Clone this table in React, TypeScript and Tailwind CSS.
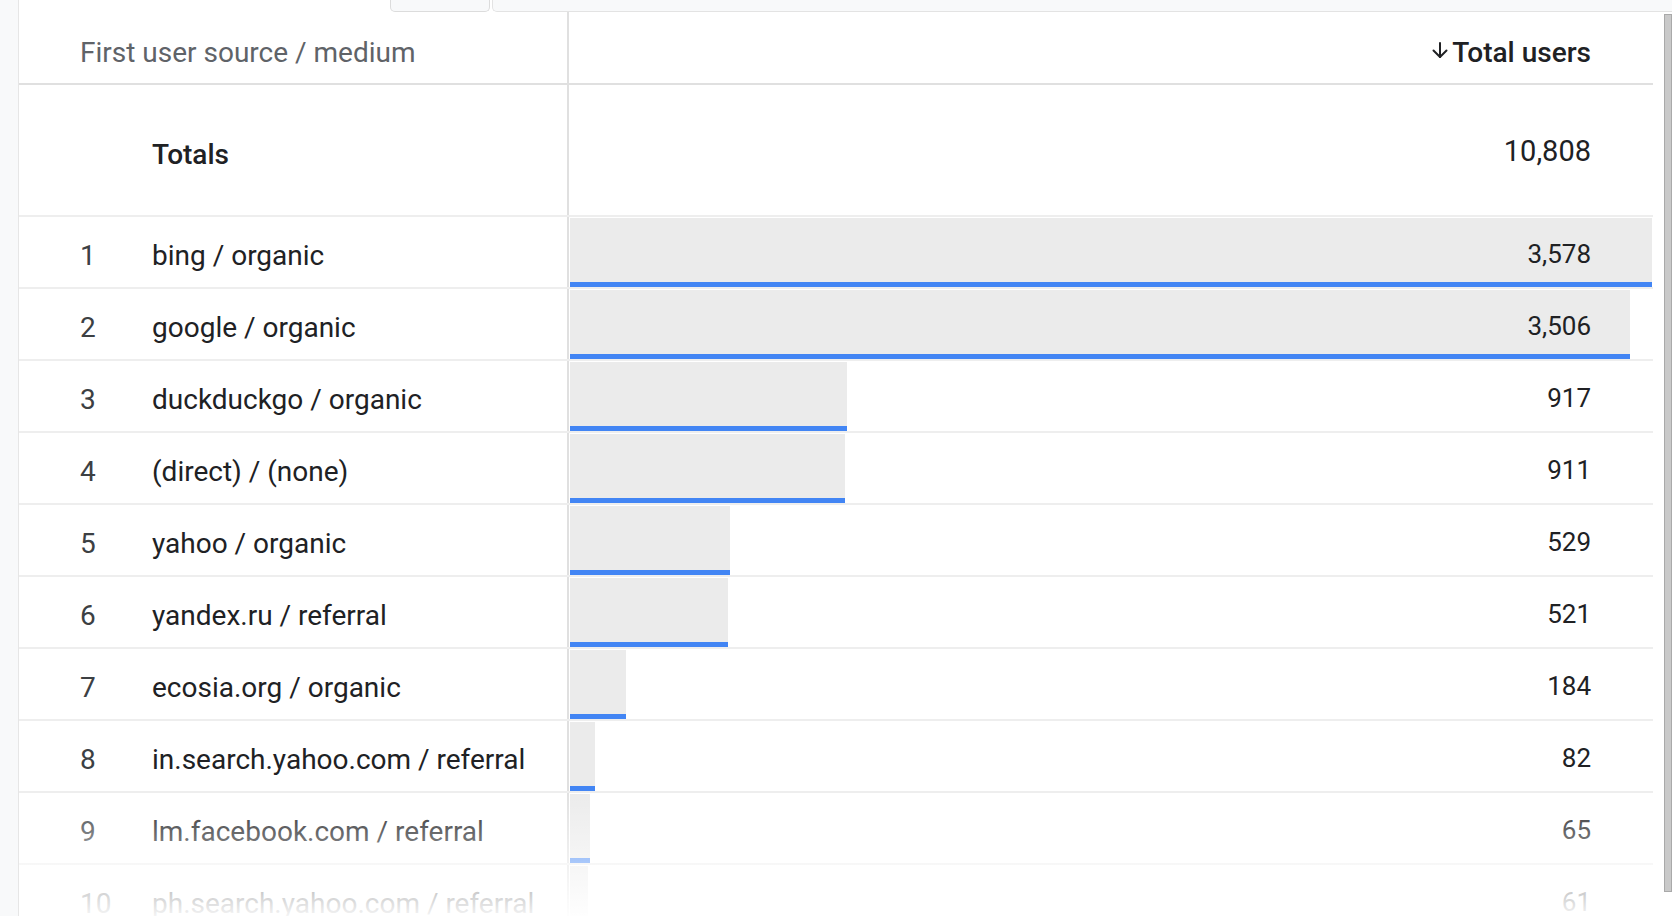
import { useMemo } from 'react'

interface Row {
  source: string
  users: number
}

const rows: Row[] = [
  { source: 'bing / organic', users: 3578 },
  { source: 'google / organic', users: 3506 },
  { source: 'duckduckgo / organic', users: 917 },
  { source: '(direct) / (none)', users: 911 },
  { source: 'yahoo / organic', users: 529 },
  { source: 'yandex.ru / referral', users: 521 },
  { source: 'ecosia.org / organic', users: 184 },
  { source: 'in.search.yahoo.com / referral', users: 82 },
  { source: 'lm.facebook.com / referral', users: 65 },
  { source: 'ph.search.yahoo.com / referral', users: 61 },
]

const BAR_MAX = 1082

function SortArrow() {
  return (
    <svg width="18" height="18" viewBox="0 0 18 18" fill="none" stroke="#202124" strokeWidth="2" strokeLinecap="round" strokeLinejoin="round" className="mb-[6px] mr-[3px]">
      <path d="M9 2v14" />
      <path d="M2.5 9.5L9 16l6.5-6.5" />
    </svg>
  )
}

export default function App() {
  const max = useMemo(() => Math.max(...rows.map((r) => r.users)), [])

  return (
    <div className="relative flex h-[916px] w-[1672px] overflow-hidden bg-white font-['Roboto',sans-serif]">
      {/* left page gutter */}
      <div className="w-[19px] shrink-0 border-r border-[#e6e6e6] bg-[#f8f9fa]" />

      <div className="flex min-w-0 flex-1 flex-col">
        {/* tabs strip peeking at the top */}
        <div className="flex h-[12px] shrink-0">
          <div className="w-[371px] bg-white" />
          <div className="w-[100px] rounded-b-[5px] border-x border-b border-[#dcdcdc] bg-[#f8f9fa]" />
          <div className="ml-[2px] flex-1 rounded-bl-[5px] border-b border-l border-[#e3e3e3] bg-[#f8f9fa]" />
        </div>

        <div className="flex flex-1">
          {/* table */}
          <div className="flex w-[1634px] flex-col text-[#202124]">
            {/* header */}
            <div className="flex h-[73px] border-b-2 border-[#e0e0e0]">
              <div className="flex w-[550px] items-center border-r-2 border-[#e0e0e0] pl-[61px] pt-[10px] text-[28px] text-[#5f6368]">
                First user source / medium
              </div>
              <div className="flex flex-1 items-center justify-end pr-[62px] pt-[10px] text-[28px] font-medium">
                <SortArrow />
                Total users
              </div>
            </div>

            {/* totals */}
            <div className="flex h-[132px] border-b-2 border-[#eeeeee]">
              <div className="flex w-[550px] items-center border-r-2 border-[#e0e0e0] pl-[133px] pt-[10px] text-[28px] font-medium">
                Totals
              </div>
              <div className="flex flex-1 items-center justify-end pr-[62px] pt-[3px] text-[29px]">10,808</div>
            </div>

            {rows.map((r, i) => (
              <div key={r.source} className="flex h-[72px] shrink-0 border-b-2 border-[#eeeeee]">
                <div className="flex w-[550px] items-center border-r-2 border-[#e0e0e0] pl-[61px] pt-[7px] text-[28px]">
                  <span className="w-[72px] text-[#3c4043]">{i + 1}</span>
                  <span className="whitespace-nowrap">{r.source}</span>
                </div>
                <div className="grid flex-1 pl-[1px] pt-[1px]">
                  <div
                    className="col-start-1 row-start-1 flex flex-col"
                    style={{ width: Math.round((r.users / max) * BAR_MAX) }}
                  >
                    <div className="flex-1 bg-[#ebebeb]" />
                    <div className="h-[5px] bg-[#4285f4]" />
                  </div>
                  <div className="col-start-1 row-start-1 self-center justify-self-end pr-[62px] pt-[3px] text-[26px] text-[#202124]">
                    {r.users.toLocaleString('en-US')}
                  </div>
                </div>
              </div>
            ))}
          </div>

          <div className="w-[11px]" />

          {/* scrollbar */}
          <div className="flex w-[8px] flex-col pt-[2px]">
            <div className="h-[878px] border border-[#a9a9a9] bg-[#c9c9c9]" />
          </div>
        </div>
      </div>

      {/* fade-out of the clipped rows at the bottom */}
      <div className="pointer-events-none absolute bottom-0 left-[19px] top-[790px] w-[1634px] bg-linear-to-b from-white/0 to-white/95" />
    </div>
  )
}
